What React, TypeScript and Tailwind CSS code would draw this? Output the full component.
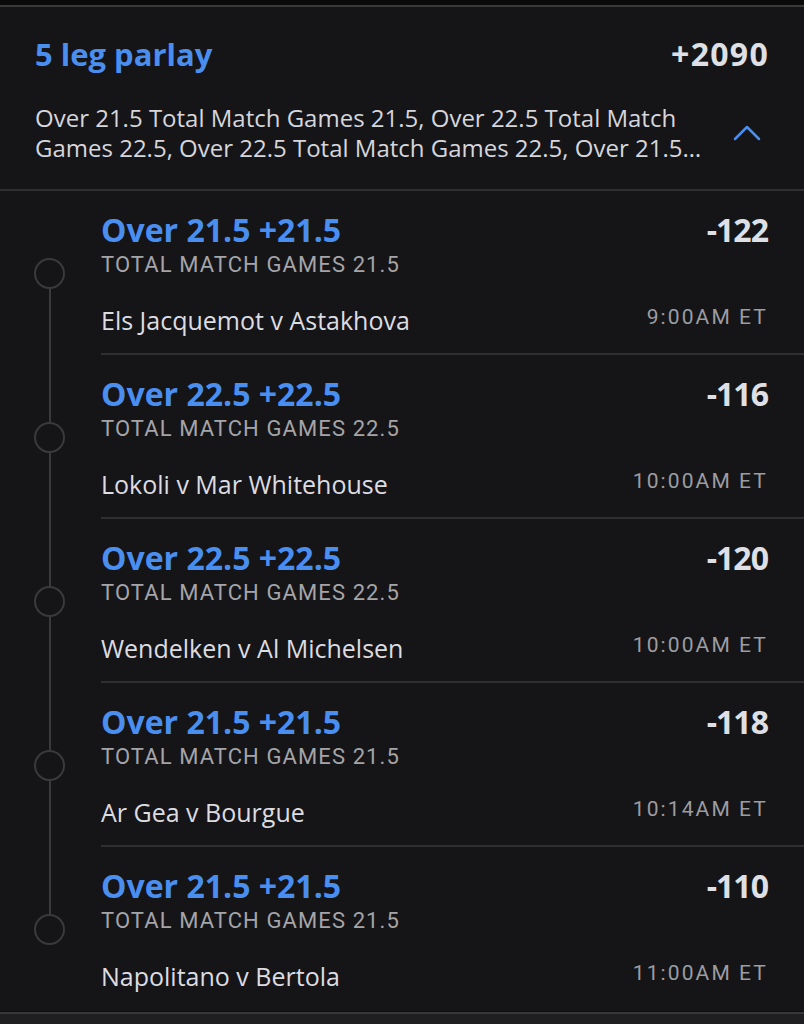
import type { ReactNode } from "react";

interface Leg {
  line: string;
  market: string;
  odds: string;
  matchup: string;
  time: string;
}

const legs: Leg[] = [
  { line: "Over 21.5 +21.5", market: "Total Match Games 21.5", odds: "-122", matchup: "Els Jacquemot v Astakhova", time: "9:00AM ET" },
  { line: "Over 22.5 +22.5", market: "Total Match Games 22.5", odds: "-116", matchup: "Lokoli v Mar Whitehouse", time: "10:00AM ET" },
  { line: "Over 22.5 +22.5", market: "Total Match Games 22.5", odds: "-120", matchup: "Wendelken v Al Michelsen", time: "10:00AM ET" },
  { line: "Over 21.5 +21.5", market: "Total Match Games 21.5", odds: "-118", matchup: "Ar Gea v Bourgue", time: "10:14AM ET" },
  { line: "Over 21.5 +21.5", market: "Total Match Games 21.5", odds: "-110", matchup: "Napolitano v Bertola", time: "11:00AM ET" },
];

function TimelineSegment({ show }: { show: boolean }) {
  return <div className={show ? "w-[2px] flex-1 bg-[#3a3a3d]" : "w-[2px] flex-1"} />;
}

function LegRow({ leg, first, last }: { leg: Leg; first: boolean; last: boolean }) {
  return (
    <div className="flex h-[164px]">
      {/* timeline column */}
      <div className="flex w-[101px] shrink-0 flex-col items-center pr-[2px]">
        <TimelineSegment show={!first} />
        <div className="h-[31px] w-[31px] rounded-full border-2 border-[#3a3a3d]" />
        <TimelineSegment show={!last} />
      </div>
      <div
        className={
          "flex flex-1 flex-col pr-[36px] pt-[21px] " +
          (last ? "" : "border-b-2 border-[#2f2f32]")
        }
      >
        <div className="flex items-start justify-between">
          <span className="text-[32px] font-bold leading-[36px] text-[#4a8ef0]">{leg.line}</span>
          <span className="text-[32px] font-bold leading-[36px] tracking-[-0.03em] text-[#dfe0e5]">{leg.odds}</span>
        </div>
        <div className="mt-[3px] font-['Roboto'] text-[22px] uppercase leading-[28px] tracking-[0.05em] text-[#a4a4a9]">
          {leg.market}
        </div>
        <div className="mt-[26px] flex items-start justify-between">
          <span className="text-[25px] leading-[30px] text-[#dcdce1]">{leg.matchup}</span>
          <span className="font-['Roboto'] text-[21px] leading-[24px] tracking-[0.1em] text-[#9c9ca1]">{leg.time}</span>
        </div>
      </div>
    </div>
  );
}

function Card({ children }: { children: ReactNode }) {
  return (
    <div className="border-t-2 border-[#3a3a3c] bg-[#151517]">
      {children}
      <div className="h-px bg-[#0e0e0f]" />
      <div className="h-[2px] bg-[#38383a]" />
    </div>
  );
}

export default function App() {
  return (
    <div className="min-h-[1024px] bg-[#1f1f21] font-['Open_Sans',sans-serif]">
      <div className="h-[5px] bg-[#0a0a0a]" />
      <Card>
        <div className="border-b-2 border-[#2f2f32] px-[35px] pt-[29px] pb-[26px]">
          <div className="flex items-center justify-between">
            <span className="text-[31px] font-bold leading-[36px] text-[#4a8ef0]">5 leg parlay</span>
            <span className="text-[32px] font-bold leading-[36px] tracking-[0.04em] text-[#dfe0e5]">+2090</span>
          </div>
          <div className="mt-[31px] flex items-center justify-between">
            <p className="line-clamp-2 w-[672px] text-[24px] leading-[30px] text-[#d6d6db]">
              Over 21.5 Total Match Games 21.5, Over 22.5 Total Match Games 22.5, Over 22.5 Total Match Games 22.5, Over 21.5 Total Match Games 21.5, Over 21.5 Total Match Games 21.5
            </p>
            <svg width="28" height="16" viewBox="0 0 28 16" className="mr-[8px]">
              <polyline points="2,14 14,2 26,14" fill="none" stroke="#4a8ef0" strokeWidth="2.5" strokeLinecap="round" strokeLinejoin="round" />
            </svg>
          </div>
        </div>
        {legs.map((leg, i) => (
          <LegRow key={i} leg={leg} first={i === 0} last={i === legs.length - 1} />
        ))}
      </Card>
    </div>
  );
}
